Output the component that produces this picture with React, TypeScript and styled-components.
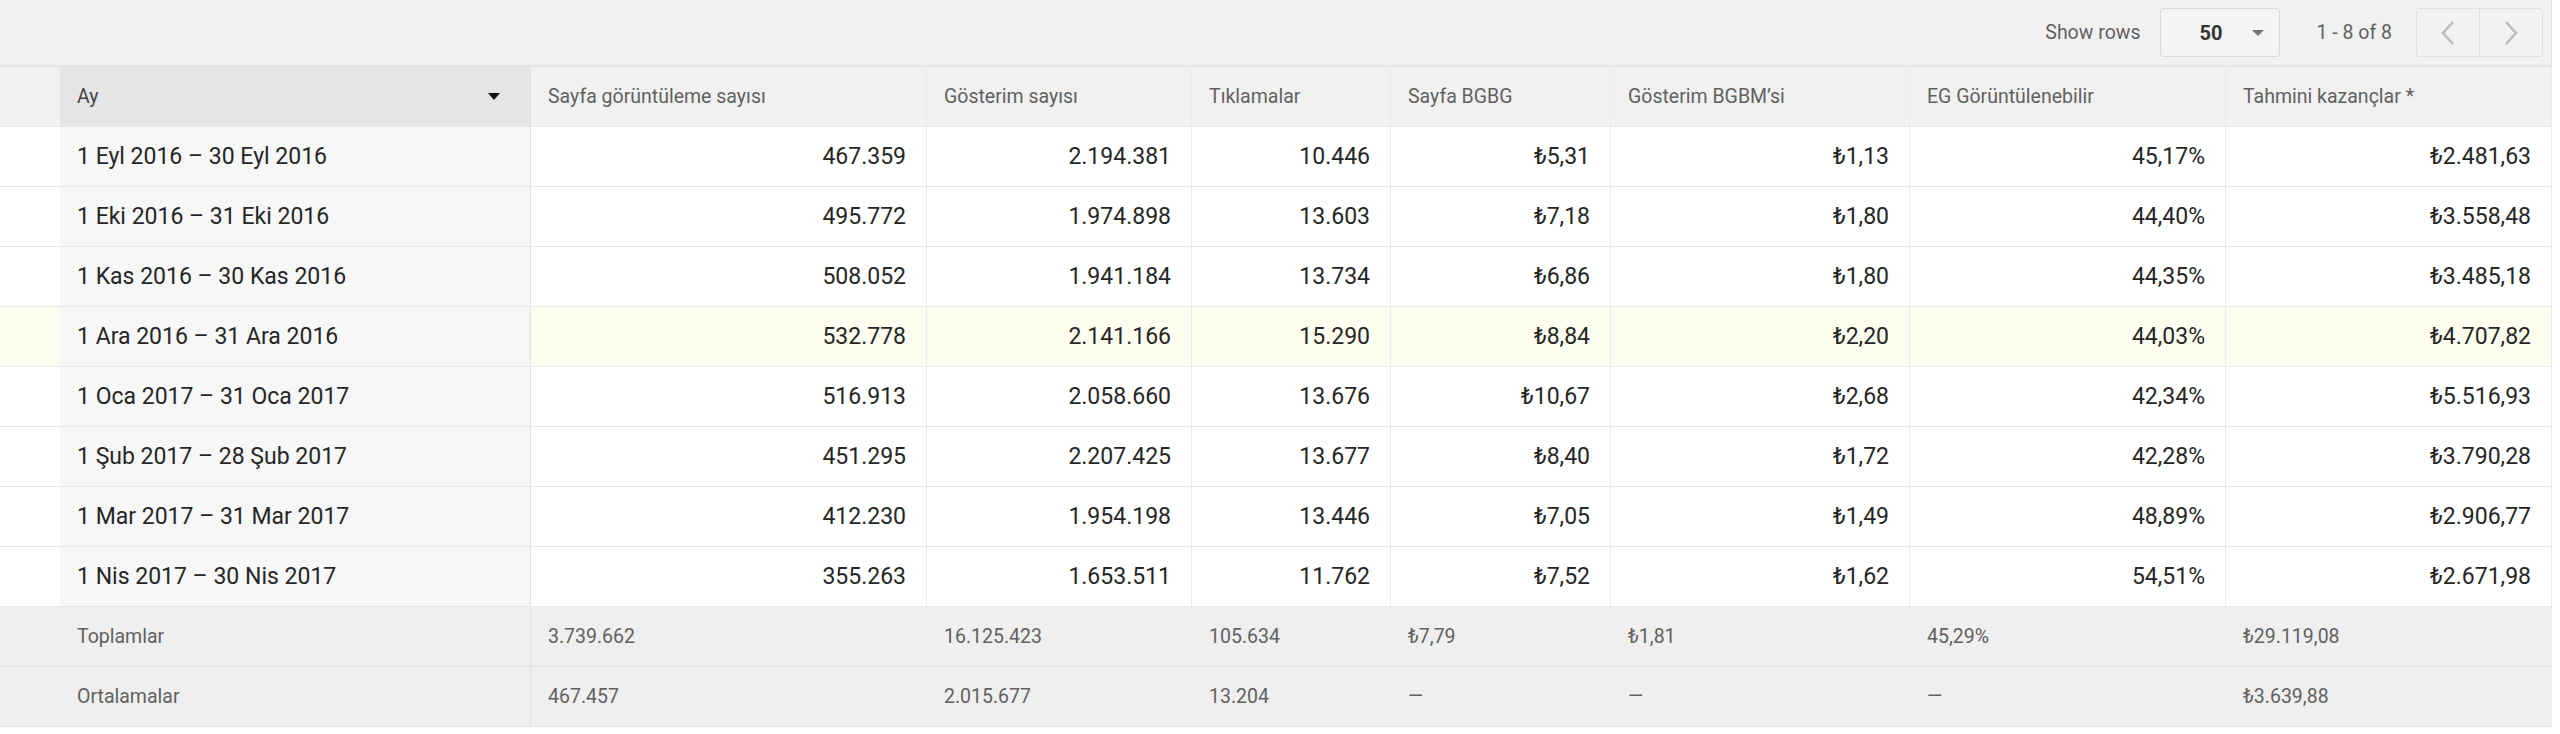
import React from 'react'
import styled, { createGlobalStyle, css } from 'styled-components'

const GlobalStyle = createGlobalStyle`
  html, body {
    margin: 0;
    padding: 0;
    background: #ffffff;
    font-family: Roboto, "Liberation Sans", Arial, sans-serif;
  }
`

const COLS = '60px 471px 396px 265px 199px 220px 299px 316px 326px'

type RowKind = 'head' | 'data' | 'hl' | 'total'

const Page = styled.div`
  width: 2552px;
  border-right: 1px solid #e2e2e2;
  box-sizing: border-box;
`

const Toolbar = styled.div`
  height: 66px;
  box-sizing: border-box;
  background: #f1f1f1;
  border-bottom: 1px solid #e4e4e4;
  display: flex;
  justify-content: flex-end;
  align-items: center;
  padding-right: 8px;
  color: #616161;
  font-size: 19.5px;
`

const ToolLabel = styled.span`
  margin-right: 20px;
`

const RowSelect = styled.div`
  width: 120px;
  height: 49px;
  box-sizing: border-box;
  border: 1px solid #d9d9d9;
  border-radius: 3px;
  background: #f4f4f4;
  display: flex;
  align-items: center;
  justify-content: space-between;
  padding: 0 15px 0 38px;
  margin-right: 36px;
  font-weight: 700;
  font-size: 20px;
  color: #333333;
`

const Caret = styled.span`
  width: 0;
  height: 0;
  border-left: 6px solid transparent;
  border-right: 6px solid transparent;
  border-top: 6px solid #757575;
`

const PageInfo = styled.span`
  margin-right: 24px;
`

const NavGroup = styled.div`
  display: flex;
  height: 49px;
  box-sizing: border-box;
  border: 1px solid #e0e0e0;
  border-radius: 3px;
  background: #f2f2f2;
`

const NavButton = styled.div<{ first?: boolean }>`
  width: 62px;
  display: flex;
  align-items: center;
  justify-content: center;
  ${({ first }) => first && 'border-right: 1px solid #dcdcdc;'}
`

const Grid = styled.div<{ kind: RowKind }>`
  display: grid;
  grid-template-columns: ${COLS};
  height: ${({ kind }) => (kind === 'head' ? 61 : 60)}px;
  box-sizing: border-box;
  border-bottom: 1px solid ${({ kind }) => (kind === 'total' ? '#e0e0e0' : '#e8e8e8')};
  background: ${({ kind }) =>
    kind === 'head' ? '#f1f1f1' : kind === 'total' ? '#efefef' : kind === 'hl' ? '#fefef0' : '#ffffff'};
  ${({ kind }) =>
    kind === 'head' &&
    css`
      box-shadow: inset 0 2px 2px -1px rgba(0, 0, 0, 0.06);
    `}
`

const Cell = styled.div<{ right?: boolean; kind: RowKind; first?: boolean; blank?: boolean; sorted?: boolean }>`
  display: flex;
  align-items: center;
  justify-content: ${({ right }) => (right ? 'flex-end' : 'flex-start')};
  padding: ${({ right }) => (right ? '0 20px 0 18px' : '0 18px 0 17px')};
  box-sizing: border-box;
  overflow: hidden;
  white-space: nowrap;
  border-right: ${({ blank, first }) => (blank ? 'none' : first ? '1px solid #e2e2e2' : '1px solid #ebebeb')};
  font-size: ${({ kind }) => (kind === 'data' || kind === 'hl' ? '23px' : '19.5px')};
  color: ${({ kind }) => (kind === 'data' || kind === 'hl' ? '#262626' : '#616161')};
  ${({ first, kind }) =>
    first &&
    (kind === 'data' || kind === 'hl') &&
    css`
      background: #f7f7f7;
    `}
  ${({ sorted }) =>
    sorted &&
    css`
      background: #e5e5e5;
      color: #444444;
      justify-content: space-between;
      padding-right: 30px;
    `}
`

const SortArrow = styled.span`
  width: 0;
  height: 0;
  border-left: 6px solid transparent;
  border-right: 6px solid transparent;
  border-top: 7px solid #111111;
`

const headers = [
  'Sayfa görüntüleme sayısı',
  'Gösterim sayısı',
  'Tıklamalar',
  'Sayfa BGBG',
  'Gösterim BGBM’si',
  'EG Görüntülenebilir',
  'Tahmini kazançlar *',
]

const rows: string[][] = [
  ['1 Eyl 2016 – 30 Eyl 2016', '467.359', '2.194.381', '10.446', '₺5,31', '₺1,13', '45,17%', '₺2.481,63'],
  ['1 Eki 2016 – 31 Eki 2016', '495.772', '1.974.898', '13.603', '₺7,18', '₺1,80', '44,40%', '₺3.558,48'],
  ['1 Kas 2016 – 30 Kas 2016', '508.052', '1.941.184', '13.734', '₺6,86', '₺1,80', '44,35%', '₺3.485,18'],
  ['1 Ara 2016 – 31 Ara 2016', '532.778', '2.141.166', '15.290', '₺8,84', '₺2,20', '44,03%', '₺4.707,82'],
  ['1 Oca 2017 – 31 Oca 2017', '516.913', '2.058.660', '13.676', '₺10,67', '₺2,68', '42,34%', '₺5.516,93'],
  ['1 Şub 2017 – 28 Şub 2017', '451.295', '2.207.425', '13.677', '₺8,40', '₺1,72', '42,28%', '₺3.790,28'],
  ['1 Mar 2017 – 31 Mar 2017', '412.230', '1.954.198', '13.446', '₺7,05', '₺1,49', '48,89%', '₺2.906,77'],
  ['1 Nis 2017 – 30 Nis 2017', '355.263', '1.653.511', '11.762', '₺7,52', '₺1,62', '54,51%', '₺2.671,98'],
]

const totals: string[][] = [
  ['Toplamlar', '3.739.662', '16.125.423', '105.634', '₺7,79', '₺1,81', '45,29%', '₺29.119,08'],
  ['Ortalamalar', '467.457', '2.015.677', '13.204', '—', '—', '—', '₺3.639,88'],
]

const Chevron = ({ dir }: { dir: 'left' | 'right' }) => (
  <svg width="16" height="26" viewBox="0 0 16 26">
    <polyline
      points={dir === 'left' ? '13,2 3,13 13,24' : '3,2 13,13 3,24'}
      fill="none"
      stroke="#bdbdbd"
      strokeWidth="2.6"
    />
  </svg>
)

function Row({ cells, kind }: { cells: string[]; kind: RowKind }) {
  return (
    <Grid kind={kind}>
      <Cell kind={kind} blank />
      {cells.map((c, i) => (
        <Cell key={i} kind={kind} first={i === 0} right={i > 0 && kind !== 'total'}>
          {c}
        </Cell>
      ))}
    </Grid>
  )
}

export default function App() {
  return (
    <Page>
      <GlobalStyle />
      <Toolbar>
        <ToolLabel>Show rows</ToolLabel>
        <RowSelect>
          50
          <Caret />
        </RowSelect>
        <PageInfo>1 - 8 of 8</PageInfo>
        <NavGroup>
          <NavButton first>
            <Chevron dir="left" />
          </NavButton>
          <NavButton>
            <Chevron dir="right" />
          </NavButton>
        </NavGroup>
      </Toolbar>
      <Grid kind="head">
        <Cell kind="head" blank />
        <Cell kind="head" first sorted>
          Ay
          <SortArrow />
        </Cell>
        {headers.map((h) => (
          <Cell key={h} kind="head">
            {h}
          </Cell>
        ))}
      </Grid>
      {rows.map((r, i) => (
        <Row key={r[0]} cells={r} kind={i === 3 ? 'hl' : 'data'} />
      ))}
      {totals.map((r) => (
        <Row key={r[0]} cells={r} kind="total" />
      ))}
    </Page>
  )
}
